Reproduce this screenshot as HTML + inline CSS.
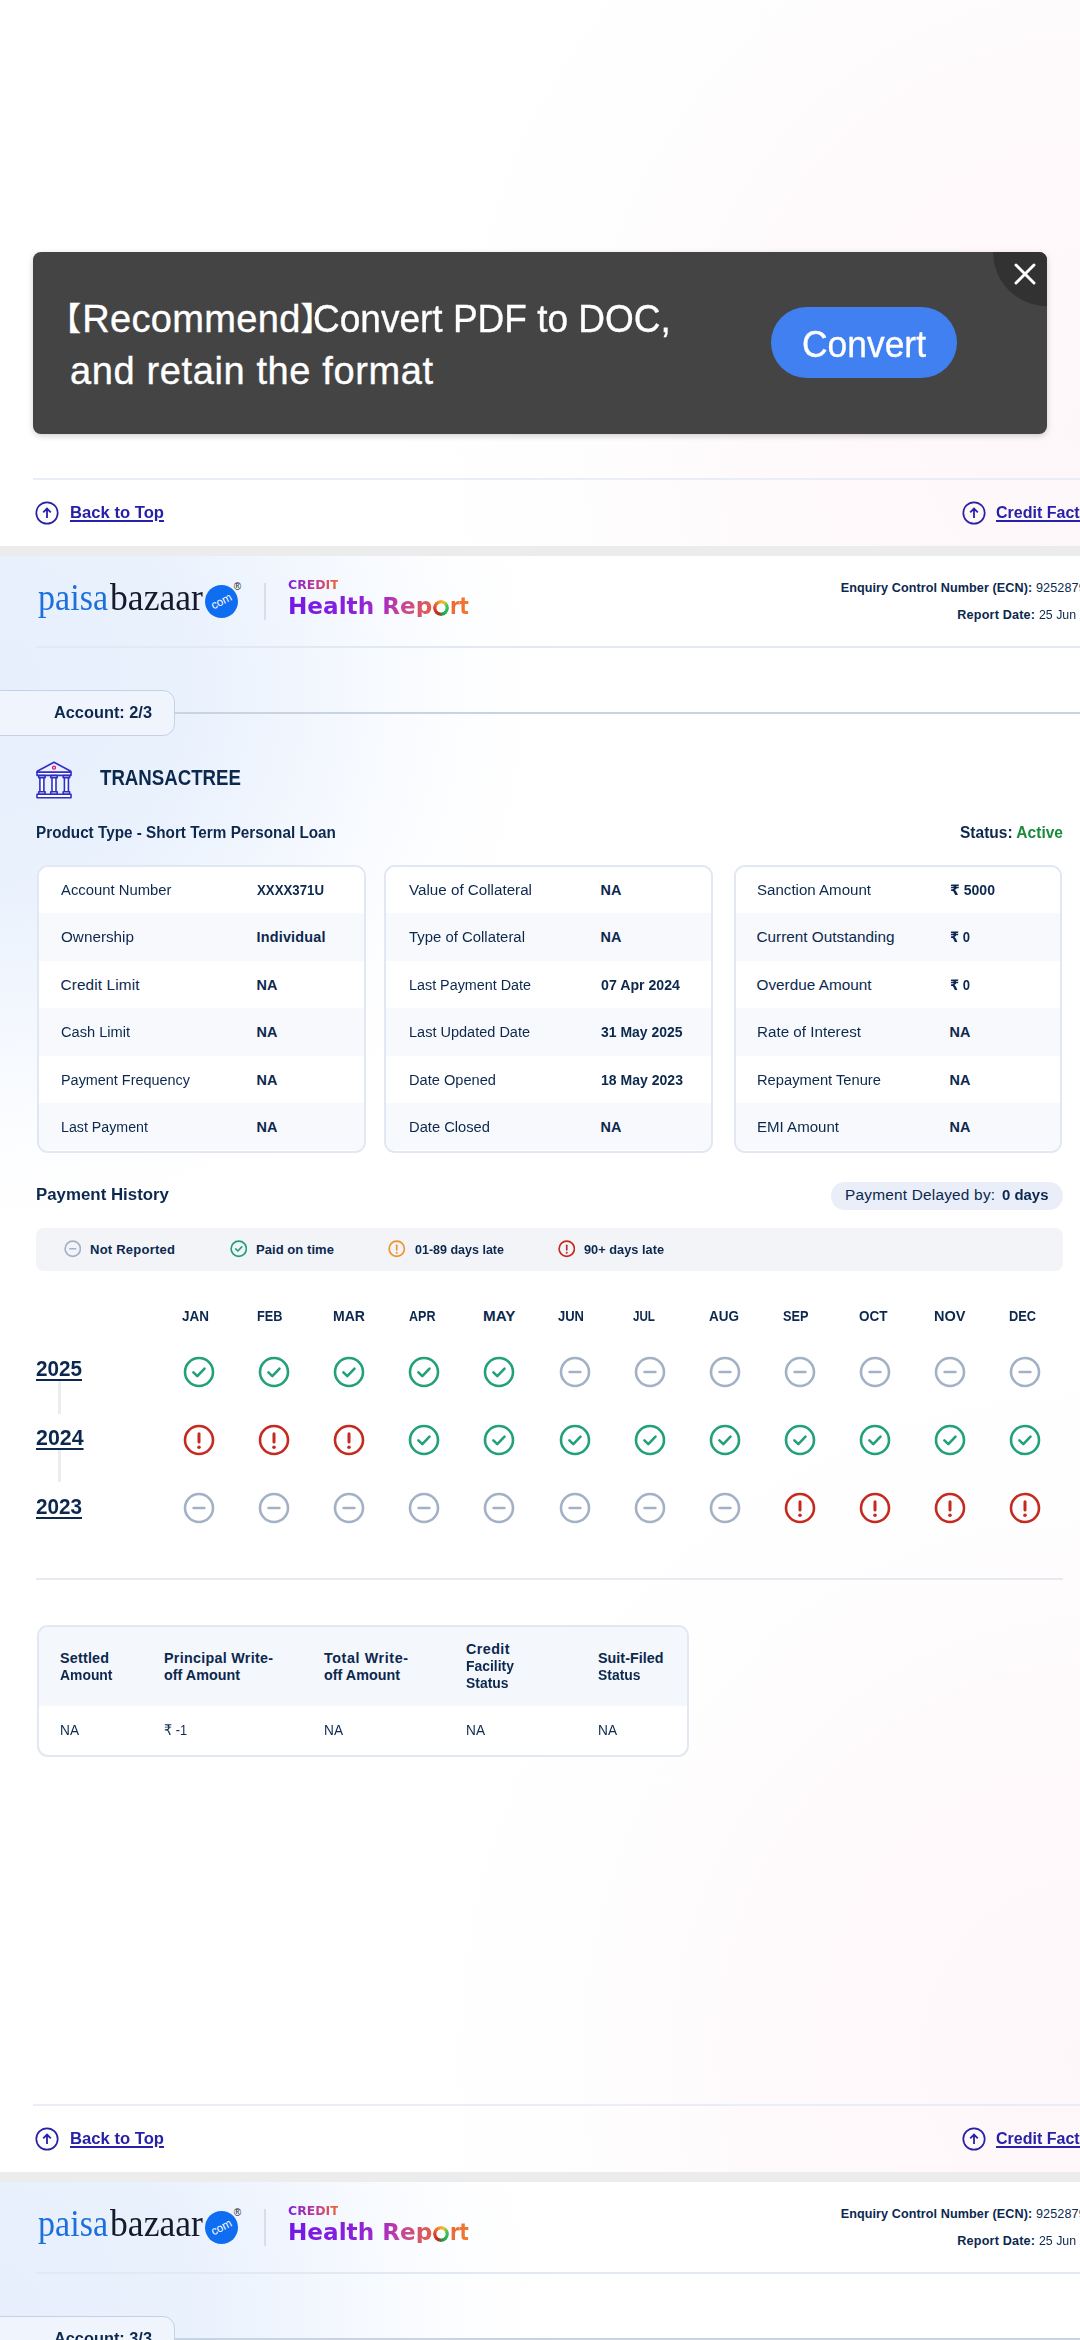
<!DOCTYPE html>
<html lang="en">
<head>
<meta charset="utf-8">
<title>Credit Health Report</title>
<style>
*{box-sizing:border-box;margin:0;padding:0}
html,body{width:1080px;height:2340px;overflow:hidden;background:#ececec}
body{position:relative;font-family:"Liberation Sans","DejaVu Sans",sans-serif;color:#0c284e}
.page{position:absolute;left:0;width:1080px;height:1616px;overflow:hidden;background:#fff}
.page .bg{position:absolute;inset:0;
 background:
  radial-gradient(ellipse 570px 560px at -10px 130px, rgba(231,239,253,1) 0%, rgba(233,241,253,.97) 36%, rgba(238,244,254,.62) 62%, rgba(246,249,255,.25) 82%, rgba(255,255,255,0) 100%),
  radial-gradient(ellipse 700px 720px at 1100px 1500px, rgba(254,247,249,1) 0%, rgba(254,248,250,.9) 40%, rgba(254,251,252,.5) 70%, rgba(255,255,255,0) 100%);}
.abs{position:absolute}
.t{position:absolute;white-space:nowrap;line-height:1;transform-origin:0 50%}
.b{font-weight:bold}
/* header */
.hline{position:absolute;left:36px;right:0;height:2px;background:#e2e9f3}
.pb{position:absolute;left:38px;top:22px;font-family:"Liberation Serif","DejaVu Serif",serif;font-size:37px;line-height:44px;letter-spacing:-0.5px;white-space:nowrap;color:#161a2b}
.pb i{font-style:normal;color:#1c6fdc}
.com{position:absolute;width:33px;height:33px;border-radius:50%;background:#0f6df2}
.com span{position:absolute;left:0;top:0;width:33px;height:33px;line-height:32px;text-align:center;color:#fff;font-size:11.5px;transform:rotate(-27deg)}
.reg{position:absolute;font-size:10px;line-height:10px;color:#222;z-index:2}
.vbar{position:absolute;width:2px;height:37px;background:#d5deec}
.credit{position:absolute;left:288px;top:21px;font-size:14px;line-height:16px;font-weight:bold;letter-spacing:.2px;background:linear-gradient(90deg,#7a22e0 0%,#c23a8a 60%,#ec6a2c 100%);-webkit-background-clip:text;background-clip:text;color:transparent}
.hr{position:absolute;left:287px;top:34px;font-size:27px;line-height:32px;font-weight:bold;white-space:nowrap;letter-spacing:-.2px;background:linear-gradient(90deg,#7418e6 0%,#9a2ad0 38%,#c84a80 62%,#ee7a2a 100%);-webkit-background-clip:text;background-clip:text;color:transparent}
.ecn{position:absolute;left:840px;top:24px;font-size:12.5px;line-height:14px;white-space:nowrap}
.rdate{position:absolute;left:957px;top:52px;font-size:12.5px;line-height:14px;white-space:nowrap}
/* account tab */
.tab{position:absolute;left:-20px;width:195px;height:46px;border:1.5px solid #c6d2e4;border-radius:12px;background:#eff4fd}
.tabline{position:absolute;left:175px;right:0;height:2px;background:#c9d4e3}
/* footer */
.fline{position:absolute;left:33px;right:0;height:2px;background:#e9edf5}
.lnk{position:absolute;font-size:17.5px;line-height:20px;font-weight:bold;color:#2a22a8;text-decoration:underline;text-decoration-thickness:2px;text-underline-offset:2px;white-space:nowrap}
.upic{position:absolute;width:24px;height:24px}

/* cards */
.card{position:absolute;top:309.3px;width:328.8px;height:288px;border:2.5px solid #e2e8f3;border-radius:11px;background:#fff;overflow:hidden}
.row{position:relative;height:47.45px;background:#fff}
.row:first-child{height:45.9px}
.row.g{background:#f7f9fc}
.k{position:absolute;left:21px;top:14px;font-size:14.6px;line-height:18px;white-space:nowrap;letter-spacing:.3px}
.v{position:absolute;top:14px;font-size:14.2px;line-height:18px;font-weight:bold;white-space:nowrap;letter-spacing:.2px}
.pill{position:absolute;left:831px;top:625.6px;width:232px;height:28px;border-radius:14px;background:#e9eef8;font-size:15.3px;line-height:28px;padding-left:14px;white-space:nowrap;letter-spacing:.3px}
.legend{position:absolute;left:36px;top:671.5px;width:1027px;height:43.2px;border-radius:8px;background:#f2f4f8}
.li{position:absolute;top:12.6px;width:17.5px;height:17.5px;stroke-width:3}
.lt{position:absolute;top:14px;font-size:12.6px;line-height:16px;font-weight:bold;white-space:nowrap;letter-spacing:.1px}
.mo{position:absolute;top:752px;font-size:14.6px;line-height:16px;font-weight:bold;white-space:nowrap;letter-spacing:.2px}
.yr{position:absolute;left:36px;font-size:21.5px;line-height:24px;font-weight:bold;text-decoration:underline;text-decoration-thickness:2px;text-underline-offset:2px;letter-spacing:-.4px}
.yc{position:absolute;left:58px;width:3px;height:33px;background:#ebedf1}
.ic{position:absolute;width:32px;height:32px;stroke-width:2.6}
.hr2{position:absolute;left:36px;width:1027px;height:2px;background:#e6ebf3}
.btab{position:absolute;left:37.2px;top:1068.7px;width:651.6px;height:132.3px;border:2.5px solid #e2e8f3;border-radius:11px;background:#fff;overflow:hidden}
.bh{position:absolute;left:0;top:0;right:0;height:79.5px;background:#f4f7fc}
.th{position:absolute;font-size:14px;line-height:17px;font-weight:bold;letter-spacing:.25px;white-space:nowrap}
.td{position:absolute;top:95px;font-size:14.3px;line-height:17px;white-space:nowrap}

/* banner */
.banner{position:absolute;left:33px;top:252px;width:1014px;height:182px;border-radius:8px;background:#444;overflow:hidden;box-shadow:0 2px 6px rgba(0,0,0,.18)}
.corner{position:absolute;right:-54px;top:-54px;width:108px;height:108px;border-radius:50%;background:#323232}
.bx{position:absolute;left:980px;top:10px;width:24px;height:24px}
.cbtn{position:absolute;left:738px;top:54.5px;width:186px;height:71.5px;border-radius:36px;background:#4080f0}
.g1{background:linear-gradient(90deg,#7a22e0 0%,#c23a8a 60%,#ec6a2c 100%);-webkit-background-clip:text;background-clip:text;color:transparent}
.g2{background:linear-gradient(100deg,#7216e8 0%,#8a22da 45%,#a82cc0 66%,#c2479a 78%,#d4546c 90%,#e66044 100%);-webkit-background-clip:text;background-clip:text;color:transparent}
.g3{background:linear-gradient(100deg,#e8683c 0%,#f27c2a 100%);-webkit-background-clip:text;background-clip:text;color:transparent}
.oring{position:absolute;width:16px;height:16px;border-radius:50%;color:transparent;font-size:10px;line-height:16px;text-align:center;overflow:hidden;background:conic-gradient(from 0deg,#f0b030 0deg,#e8c040 30deg,#38c45c 75deg,#2fb457 130deg,#1f9a48 170deg,#b82a1e 200deg,#e0402a 270deg,#ee7a30 320deg,#f0b030 360deg);-webkit-mask:radial-gradient(circle,transparent 4.2px,#000 4.9px);mask:radial-gradient(circle,transparent 4.2px,#000 4.9px)}
</style>
</head>
<body>
<svg width="0" height="0" style="position:absolute">
  <defs>
    <g id="i-nr"><circle cx="15" cy="15" r="14" fill="none" stroke="#a3b1c6"/><path d="M9.6 15h10.8" stroke="#a3b1c6" stroke-linecap="round" fill="none"/></g>
    <g id="i-ok"><circle cx="15" cy="15" r="14" fill="none" stroke="#22a07a"/><path d="M9.4 15.4l3.9 3.7 7.2-7.4" stroke="#22a07a" stroke-linecap="round" stroke-linejoin="round" fill="none"/></g>
    <g id="i-late"><circle cx="15" cy="15" r="14" fill="none" stroke="currentColor"/><rect x="13.5" y="7.2" width="3" height="11.4" rx="1.5" fill="currentColor" stroke="none"/><circle cx="15" cy="22.2" r="1.8" fill="currentColor" stroke="none"/></g>
  </defs>
</svg>

<!-- PAGE 1 (tail) -->
<div class="page" style="top:-1070px">
  <div class="bg"></div>
  <div class="fline" style="top:1548.0px"></div>
  <svg class="upic" style="left:35px;top:1570.5px" viewBox="0 0 24 24"><circle cx="12" cy="12" r="10.7" fill="none" stroke="#2621a8" stroke-width="1.7"/><path d="M12 17V7.8M8.2 11.4l3.8-3.8 3.8 3.8" fill="none" stroke="#2621a8" stroke-width="1.8"/></svg>
  <svg class="upic" style="left:962px;top:1570.5px" viewBox="0 0 24 24"><circle cx="12" cy="12" r="10.7" fill="none" stroke="#2621a8" stroke-width="1.7"/><path d="M12 17V7.8M8.2 11.4l3.8-3.8 3.8 3.8" fill="none" stroke="#2621a8" stroke-width="1.8"/></svg>
  <div class="t b" style="left:70px;top:1574px;font-size:17.2px;transform:scaleX(0.968);color:#2621a8;text-decoration:underline;text-decoration-thickness:2px;text-underline-offset:2px">Back to Top</div>
  <div class="t b" style="left:995.5px;top:1574px;font-size:17.2px;transform:scaleX(0.932);color:#2621a8;text-decoration:underline;text-decoration-thickness:2px;text-underline-offset:2px">Credit Factors</div>
</div>

<!-- PAGE 2 -->
<div class="page" style="top:556px">
  <div class="bg"></div>
  <div class="com" style="left:205.1px;top:28.8px"><span>com</span></div>
  <div class="reg" style="left:233.7px;top:25.7px">®</div>
  <div class="vbar" style="left:264px;top:27.0px"></div>
  <div class="oring" style="left:433.3px;top:43.9px">o</div>
  <div class="hline" style="top:89.5px"></div>
  <div class="tab" style="top:133.5px"></div>
  <div class="tabline" style="top:156.0px"></div>
    <!-- bank icon -->
  <svg class="abs" style="left:34px;top:203px" width="40" height="40" viewBox="0 0 40 40" fill="none" stroke="#2f2fc4" stroke-width="1.6" stroke-linejoin="round">
    <path d="M20 3.2L3.2 12.2v1.2h33.6v-1.2z" fill="#eef0ff"/>
    <rect x="3" y="13.2" width="34" height="3.2" fill="#fff"/>
    <rect x="3" y="35.2" width="34" height="3.6" fill="#fff"/>
    <path d="M4.7 16.6h6.4v2.2H4.7zM4.7 32.8h6.4v2.2H4.7zM5.9 18.8h4v14h-4z" fill="#fff"/>
    <path d="M16.8 16.6h6.4v2.2h-6.4zM16.8 32.8h6.4v2.2h-6.4zM18 18.8h4v14h-4z" fill="#fff"/>
    <path d="M29.2 16.6h6.4v2.2h-6.4zM29.2 32.8h6.4v2.2h-6.4zM30.4 18.8h4v14h-4z" fill="#fff"/>
    <circle cx="20" cy="8.7" r="1.5" stroke="#d81b60" fill="#ffd7e4" stroke-width="1.3"/>
  </svg>
  <!-- cards -->
  <div class="card" style="left:37.2px"><div class="row"></div><div class="row g"></div><div class="row"></div><div class="row g"></div><div class="row"></div><div class="row g"></div></div>
  <div class="card" style="left:384.3px"><div class="row"></div><div class="row g"></div><div class="row"></div><div class="row g"></div><div class="row"></div><div class="row g"></div></div>
  <div class="card" style="left:733.7px"><div class="row"></div><div class="row g"></div><div class="row"></div><div class="row g"></div><div class="row"></div><div class="row g"></div></div>
  <!-- payment history -->
  <div class="pill"></div>
  <div class="legend">
    <svg class="li" style="left:27.75px" viewBox="-1 -1 32 32"><use href="#i-nr"/></svg>
    <svg class="li" style="left:193.75px" viewBox="-1 -1 32 32"><use href="#i-ok"/></svg>
    <svg class="li" style="left:352.25px" viewBox="-1 -1 32 32"><g color="#f0932b"><use href="#i-late"/></g></svg>
    <svg class="li" style="left:521.75px" viewBox="-1 -1 32 32"><g color="#c42a20"><use href="#i-late"/></g></svg>
  </div>
  <div class="hr2" style="top:1022px"></div>
  <!-- bottom table -->
  <div class="btab"><div class="bh"></div></div>
  <!--TEXTS-->
  <div class="yc" style="top:825.4px"></div>
  <svg class="ic" style="left:183.0px;top:800.4px" viewBox="-1 -1 32 32"><use href="#i-ok"/></svg>
  <svg class="ic" style="left:258.1px;top:800.4px" viewBox="-1 -1 32 32"><use href="#i-ok"/></svg>
  <svg class="ic" style="left:333.2px;top:800.4px" viewBox="-1 -1 32 32"><use href="#i-ok"/></svg>
  <svg class="ic" style="left:408.3px;top:800.4px" viewBox="-1 -1 32 32"><use href="#i-ok"/></svg>
  <svg class="ic" style="left:483.4px;top:800.4px" viewBox="-1 -1 32 32"><use href="#i-ok"/></svg>
  <svg class="ic" style="left:558.5px;top:800.4px" viewBox="-1 -1 32 32"><use href="#i-nr"/></svg>
  <svg class="ic" style="left:633.6px;top:800.4px" viewBox="-1 -1 32 32"><use href="#i-nr"/></svg>
  <svg class="ic" style="left:708.7px;top:800.4px" viewBox="-1 -1 32 32"><use href="#i-nr"/></svg>
  <svg class="ic" style="left:783.8px;top:800.4px" viewBox="-1 -1 32 32"><use href="#i-nr"/></svg>
  <svg class="ic" style="left:858.9px;top:800.4px" viewBox="-1 -1 32 32"><use href="#i-nr"/></svg>
  <svg class="ic" style="left:934.0px;top:800.4px" viewBox="-1 -1 32 32"><use href="#i-nr"/></svg>
  <svg class="ic" style="left:1009.1px;top:800.4px" viewBox="-1 -1 32 32"><use href="#i-nr"/></svg>
  <div class="yc" style="top:893.4px"></div>
  <svg class="ic" style="left:183.0px;top:868.4px" viewBox="-1 -1 32 32"><g color="#c42a20"><use href="#i-late"/></g></svg>
  <svg class="ic" style="left:258.1px;top:868.4px" viewBox="-1 -1 32 32"><g color="#c42a20"><use href="#i-late"/></g></svg>
  <svg class="ic" style="left:333.2px;top:868.4px" viewBox="-1 -1 32 32"><g color="#c42a20"><use href="#i-late"/></g></svg>
  <svg class="ic" style="left:408.3px;top:868.4px" viewBox="-1 -1 32 32"><use href="#i-ok"/></svg>
  <svg class="ic" style="left:483.4px;top:868.4px" viewBox="-1 -1 32 32"><use href="#i-ok"/></svg>
  <svg class="ic" style="left:558.5px;top:868.4px" viewBox="-1 -1 32 32"><use href="#i-ok"/></svg>
  <svg class="ic" style="left:633.6px;top:868.4px" viewBox="-1 -1 32 32"><use href="#i-ok"/></svg>
  <svg class="ic" style="left:708.7px;top:868.4px" viewBox="-1 -1 32 32"><use href="#i-ok"/></svg>
  <svg class="ic" style="left:783.8px;top:868.4px" viewBox="-1 -1 32 32"><use href="#i-ok"/></svg>
  <svg class="ic" style="left:858.9px;top:868.4px" viewBox="-1 -1 32 32"><use href="#i-ok"/></svg>
  <svg class="ic" style="left:934.0px;top:868.4px" viewBox="-1 -1 32 32"><use href="#i-ok"/></svg>
  <svg class="ic" style="left:1009.1px;top:868.4px" viewBox="-1 -1 32 32"><use href="#i-ok"/></svg>
  <svg class="ic" style="left:183.0px;top:936.4px" viewBox="-1 -1 32 32"><use href="#i-nr"/></svg>
  <svg class="ic" style="left:258.1px;top:936.4px" viewBox="-1 -1 32 32"><use href="#i-nr"/></svg>
  <svg class="ic" style="left:333.2px;top:936.4px" viewBox="-1 -1 32 32"><use href="#i-nr"/></svg>
  <svg class="ic" style="left:408.3px;top:936.4px" viewBox="-1 -1 32 32"><use href="#i-nr"/></svg>
  <svg class="ic" style="left:483.4px;top:936.4px" viewBox="-1 -1 32 32"><use href="#i-nr"/></svg>
  <svg class="ic" style="left:558.5px;top:936.4px" viewBox="-1 -1 32 32"><use href="#i-nr"/></svg>
  <svg class="ic" style="left:633.6px;top:936.4px" viewBox="-1 -1 32 32"><use href="#i-nr"/></svg>
  <svg class="ic" style="left:708.7px;top:936.4px" viewBox="-1 -1 32 32"><use href="#i-nr"/></svg>
  <svg class="ic" style="left:783.8px;top:936.4px" viewBox="-1 -1 32 32"><g color="#c42a20"><use href="#i-late"/></g></svg>
  <svg class="ic" style="left:858.9px;top:936.4px" viewBox="-1 -1 32 32"><g color="#c42a20"><use href="#i-late"/></g></svg>
  <svg class="ic" style="left:934.0px;top:936.4px" viewBox="-1 -1 32 32"><g color="#c42a20"><use href="#i-late"/></g></svg>
  <svg class="ic" style="left:1009.1px;top:936.4px" viewBox="-1 -1 32 32"><g color="#c42a20"><use href="#i-late"/></g></svg>
  <div class="fline" style="top:1548.0px"></div>
  <svg class="upic" style="left:35px;top:1570.5px" viewBox="0 0 24 24"><circle cx="12" cy="12" r="10.7" fill="none" stroke="#2621a8" stroke-width="1.7"/><path d="M12 17V7.8M8.2 11.4l3.8-3.8 3.8 3.8" fill="none" stroke="#2621a8" stroke-width="1.8"/></svg>
  <svg class="upic" style="left:962px;top:1570.5px" viewBox="0 0 24 24"><circle cx="12" cy="12" r="10.7" fill="none" stroke="#2621a8" stroke-width="1.7"/><path d="M12 17V7.8M8.2 11.4l3.8-3.8 3.8 3.8" fill="none" stroke="#2621a8" stroke-width="1.8"/></svg>
  <div class="t" style="left:38.4px;top:22px;font-size:38.5px;font-family:'Liberation Serif','DejaVu Serif',serif;transform:scaleX(0.885);color:#1d6fdb">paisa</div>
  <div class="t" style="left:110.4px;top:22px;font-size:38.5px;font-family:'Liberation Serif','DejaVu Serif',serif;transform:scaleX(0.926);color:#151a2c">bazaar</div>
  <div class="t b g1" style="left:288.3px;top:23px;font-size:12.9px;font-family:'DejaVu Sans','Liberation Sans',sans-serif;transform:scaleX(0.966)">CREDIT</div>
  <div class="t b g2" style="left:288.3px;top:38px;font-size:23.3px;font-family:'DejaVu Sans','Liberation Sans',sans-serif;transform:scaleX(0.993)">Health Rep</div>
  <div class="t b g3" style="left:450.4px;top:38px;font-size:23.3px;font-family:'DejaVu Sans','Liberation Sans',sans-serif;transform:scaleX(0.835)">rt</div>
  <div class="t b" style="left:840.7px;top:26px;font-size:12.6px;letter-spacing:0.09px">Enquiry Control Number (ECN):</div>
  <div class="t" style="left:1036px;top:26px;font-size:12.6px;letter-spacing:0.12px">925287954</div>
  <div class="t b" style="left:957.3px;top:53px;font-size:12.6px;letter-spacing:0.19px">Report Date:</div>
  <div class="t" style="left:1039.3px;top:53px;font-size:12.6px;transform:scaleX(0.981)">25 Jun 2025</div>
  <div class="t b" style="left:53.5px;top:149px;font-size:16.8px;transform:scaleX(0.973)">Account: 2/3</div>
  <div class="t b" style="left:100px;top:211px;font-size:21.6px;transform:scaleX(0.864)">TRANSACTREE</div>
  <div class="t b" style="left:35.5px;top:269px;font-size:15.8px;transform:scaleX(0.967)">Product Type - Short Term Personal Loan</div>
  <div class="t b" style="left:960px;top:269px;font-size:15.8px;transform:scaleX(0.983)">Status: <span style="color:#1b8a3e">Active</span></div>
  <div class="t" style="left:60.5px;top:326px;font-size:15.3px;transform:scaleX(0.970)">Account Number</div>
  <div class="t b" style="left:256.5px;top:327px;font-size:14.4px;transform:scaleX(0.920)">XXXX371U</div>
  <div class="t" style="left:60.5px;top:373px;font-size:15.3px;transform:scaleX(0.998)">Ownership</div>
  <div class="t b" style="left:256.5px;top:374px;font-size:14.4px;letter-spacing:0.20px">Individual</div>
  <div class="t" style="left:60.5px;top:421px;font-size:15.3px;letter-spacing:0.15px">Credit Limit</div>
  <div class="t b" style="left:256.5px;top:422px;font-size:14.4px;letter-spacing:0.20px">NA</div>
  <div class="t" style="left:60.5px;top:468px;font-size:15.3px;transform:scaleX(0.955)">Cash Limit</div>
  <div class="t b" style="left:256.5px;top:469px;font-size:14.4px;letter-spacing:0.20px">NA</div>
  <div class="t" style="left:60.5px;top:516px;font-size:15.3px;transform:scaleX(0.942)">Payment Frequency</div>
  <div class="t b" style="left:256.5px;top:517px;font-size:14.4px;letter-spacing:0.20px">NA</div>
  <div class="t" style="left:60.5px;top:563px;font-size:15.3px;transform:scaleX(0.930)">Last Payment</div>
  <div class="t b" style="left:256.5px;top:564px;font-size:14.4px;letter-spacing:0.20px">NA</div>
  <div class="t" style="left:408.5px;top:326px;font-size:15.3px;transform:scaleX(0.993)">Value of Collateral</div>
  <div class="t b" style="left:600.5px;top:327px;font-size:14.4px;letter-spacing:0.20px">NA</div>
  <div class="t" style="left:408.5px;top:373px;font-size:15.3px;transform:scaleX(0.974)">Type of Collateral</div>
  <div class="t b" style="left:600.5px;top:374px;font-size:14.4px;letter-spacing:0.20px">NA</div>
  <div class="t" style="left:408.5px;top:421px;font-size:15.3px;transform:scaleX(0.938)">Last Payment Date</div>
  <div class="t b" style="left:600.5px;top:422px;font-size:14.4px;transform:scaleX(0.984)">07 Apr 2024</div>
  <div class="t" style="left:408.5px;top:468px;font-size:15.3px;transform:scaleX(0.949)">Last Updated Date</div>
  <div class="t b" style="left:600.5px;top:469px;font-size:14.4px;transform:scaleX(0.970)">31 May 2025</div>
  <div class="t" style="left:408.5px;top:516px;font-size:15.3px;transform:scaleX(0.956)">Date Opened</div>
  <div class="t b" style="left:600.5px;top:517px;font-size:14.4px;transform:scaleX(0.976)">18 May 2023</div>
  <div class="t" style="left:408.5px;top:563px;font-size:15.3px;transform:scaleX(0.962)">Date Closed</div>
  <div class="t b" style="left:600.5px;top:564px;font-size:14.4px;letter-spacing:0.20px">NA</div>
  <div class="t" style="left:756.5px;top:326px;font-size:15.3px;transform:scaleX(0.986)">Sanction Amount</div>
  <div class="t b" style="left:949.5px;top:327px;font-size:14.4px;transform:scaleX(0.978)">₹ 5000</div>
  <div class="t" style="left:756.5px;top:373px;font-size:15.3px;letter-spacing:0.01px">Current Outstanding</div>
  <div class="t b" style="left:949.5px;top:374px;font-size:14.4px;transform:scaleX(0.908)">₹ 0</div>
  <div class="t" style="left:756.5px;top:421px;font-size:15.3px;letter-spacing:0.02px">Overdue Amount</div>
  <div class="t b" style="left:949.5px;top:422px;font-size:14.4px;transform:scaleX(0.908)">₹ 0</div>
  <div class="t" style="left:756.5px;top:468px;font-size:15.3px;transform:scaleX(0.994)">Rate of Interest</div>
  <div class="t b" style="left:949.5px;top:469px;font-size:14.4px;letter-spacing:0.20px">NA</div>
  <div class="t" style="left:756.5px;top:516px;font-size:15.3px;transform:scaleX(0.961)">Repayment Tenure</div>
  <div class="t b" style="left:949.5px;top:517px;font-size:14.4px;letter-spacing:0.20px">NA</div>
  <div class="t" style="left:756.5px;top:563px;font-size:15.3px;transform:scaleX(0.984)">EMI Amount</div>
  <div class="t b" style="left:949.5px;top:564px;font-size:14.4px;letter-spacing:0.20px">NA</div>
  <div class="t b" style="left:36px;top:630px;font-size:17.4px;transform:scaleX(0.969)">Payment History</div>
  <div class="t" style="left:845px;top:631px;font-size:15.4px;letter-spacing:0.21px">Payment Delayed by:</div>
  <div class="t b" style="left:1001.5px;top:631px;font-size:15.4px;transform:scaleX(0.970)">0 days</div>
  <div class="t b" style="left:90px;top:687px;font-size:13px;letter-spacing:0.24px">Not Reported</div>
  <div class="t b" style="left:256px;top:687px;font-size:13px;letter-spacing:0.06px">Paid on time</div>
  <div class="t b" style="left:415px;top:687px;font-size:13px;transform:scaleX(0.962)">01-89 days late</div>
  <div class="t b" style="left:584px;top:687px;font-size:13px;transform:scaleX(0.984)">90+ days late</div>
  <div class="t b" style="left:182px;top:752px;font-size:15.2px;transform:scaleX(0.888)">JAN</div>
  <div class="t b" style="left:257px;top:752px;font-size:15.2px;transform:scaleX(0.840)">FEB</div>
  <div class="t b" style="left:333px;top:752px;font-size:15.2px;transform:scaleX(0.925)">MAR</div>
  <div class="t b" style="left:408.5px;top:752px;font-size:15.2px;transform:scaleX(0.826)">APR</div>
  <div class="t b" style="left:483px;top:752px;font-size:15.2px;letter-spacing:0.07px">MAY</div>
  <div class="t b" style="left:558px;top:752px;font-size:15.2px;transform:scaleX(0.856)">JUN</div>
  <div class="t b" style="left:633px;top:752px;font-size:15.2px;transform:scaleX(0.766)">JUL</div>
  <div class="t b" style="left:708.5px;top:752px;font-size:15.2px;transform:scaleX(0.889)">AUG</div>
  <div class="t b" style="left:783px;top:752px;font-size:15.2px;transform:scaleX(0.839)">SEP</div>
  <div class="t b" style="left:859px;top:752px;font-size:15.2px;transform:scaleX(0.889)">OCT</div>
  <div class="t b" style="left:934px;top:752px;font-size:15.2px;transform:scaleX(0.957)">NOV</div>
  <div class="t b" style="left:1009px;top:752px;font-size:15.2px;transform:scaleX(0.842)">DEC</div>
  <div class="t b" style="left:36px;top:802px;font-size:21.6px;transform:scaleX(0.957);text-decoration:underline;text-decoration-thickness:2px;text-underline-offset:2.5px">2025</div>
  <div class="t b" style="left:36px;top:871px;font-size:21.6px;transform:scaleX(0.989);text-decoration:underline;text-decoration-thickness:2px;text-underline-offset:2.5px">2024</div>
  <div class="t b" style="left:36px;top:940px;font-size:21.6px;transform:scaleX(0.957);text-decoration:underline;text-decoration-thickness:2px;text-underline-offset:2.5px">2023</div>
  <div class="t b" style="left:60px;top:1095px;font-size:14.3px;letter-spacing:0.22px">Settled</div>
  <div class="t b" style="left:60px;top:1112px;font-size:14.3px;transform:scaleX(0.972)">Amount</div>
  <div class="t b" style="left:164px;top:1095px;font-size:14.3px;letter-spacing:0.29px">Principal Write-</div>
  <div class="t b" style="left:164px;top:1112px;font-size:14.3px;letter-spacing:0.03px">off Amount</div>
  <div class="t b" style="left:324px;top:1095px;font-size:14.3px;letter-spacing:0.61px">Total Write-</div>
  <div class="t b" style="left:324px;top:1112px;font-size:14.3px;letter-spacing:0.03px">off Amount</div>
  <div class="t b" style="left:466px;top:1086px;font-size:14.3px;letter-spacing:0.44px">Credit</div>
  <div class="t b" style="left:466px;top:1103px;font-size:14.3px;transform:scaleX(0.974)">Facility</div>
  <div class="t b" style="left:466px;top:1120px;font-size:14.3px;transform:scaleX(0.972)">Status</div>
  <div class="t b" style="left:598px;top:1095px;font-size:14.3px;letter-spacing:0.04px">Suit-Filed</div>
  <div class="t b" style="left:598px;top:1112px;font-size:14.3px;transform:scaleX(0.972)">Status</div>
  <div class="t" style="left:60px;top:1167px;font-size:14.6px;transform:scaleX(0.937)">NA</div>
  <div class="t" style="left:164px;top:1167px;font-size:14.6px;transform:scaleX(0.874)">₹ -1</div>
  <div class="t" style="left:324px;top:1167px;font-size:14.6px;transform:scaleX(0.937)">NA</div>
  <div class="t" style="left:466px;top:1167px;font-size:14.6px;transform:scaleX(0.937)">NA</div>
  <div class="t" style="left:598px;top:1167px;font-size:14.6px;transform:scaleX(0.937)">NA</div>
  <div class="t b" style="left:70px;top:1574px;font-size:17.2px;transform:scaleX(0.968);color:#2621a8;text-decoration:underline;text-decoration-thickness:2px;text-underline-offset:2px">Back to Top</div>
  <div class="t b" style="left:995.5px;top:1574px;font-size:17.2px;transform:scaleX(0.932);color:#2621a8;text-decoration:underline;text-decoration-thickness:2px;text-underline-offset:2px">Credit Factors</div>
</div>

<!-- PAGE 3 (head) -->
<div class="page" style="top:2182px">
  <div class="bg"></div>
  <div class="com" style="left:205.1px;top:28.8px"><span>com</span></div>
  <div class="reg" style="left:233.7px;top:25.7px">®</div>
  <div class="vbar" style="left:264px;top:27.0px"></div>
  <div class="oring" style="left:433.3px;top:43.9px">o</div>
  <div class="hline" style="top:89.5px"></div>
  <div class="tab" style="top:133.5px"></div>
  <div class="tabline" style="top:156.0px"></div>
  <div class="t" style="left:38.4px;top:22px;font-size:38.5px;font-family:'Liberation Serif','DejaVu Serif',serif;transform:scaleX(0.885);color:#1d6fdb">paisa</div>
  <div class="t" style="left:110.4px;top:22px;font-size:38.5px;font-family:'Liberation Serif','DejaVu Serif',serif;transform:scaleX(0.926);color:#151a2c">bazaar</div>
  <div class="t b g1" style="left:288.3px;top:23px;font-size:12.9px;font-family:'DejaVu Sans','Liberation Sans',sans-serif;transform:scaleX(0.966)">CREDIT</div>
  <div class="t b g2" style="left:288.3px;top:38px;font-size:23.3px;font-family:'DejaVu Sans','Liberation Sans',sans-serif;transform:scaleX(0.993)">Health Rep</div>
  <div class="t b g3" style="left:450.4px;top:38px;font-size:23.3px;font-family:'DejaVu Sans','Liberation Sans',sans-serif;transform:scaleX(0.835)">rt</div>
  <div class="t b" style="left:840.7px;top:26px;font-size:12.6px;letter-spacing:0.09px">Enquiry Control Number (ECN):</div>
  <div class="t" style="left:1036px;top:26px;font-size:12.6px;letter-spacing:0.12px">925287954</div>
  <div class="t b" style="left:957.3px;top:53px;font-size:12.6px;letter-spacing:0.19px">Report Date:</div>
  <div class="t" style="left:1039.3px;top:53px;font-size:12.6px;transform:scaleX(0.981)">25 Jun 2025</div>
  <div class="t b" style="left:53.5px;top:149px;font-size:16.8px;transform:scaleX(0.973)">Account: 3/3</div>
</div>

  <div class="banner"><div class="corner"></div><svg class="bx" viewBox="0 0 24 24"><path d="M3 3l18 18M21 3L3 21" stroke="#fff" stroke-width="2.9" stroke-linecap="round" fill="none"/></svg><div class="cbtn"></div></div>
  <div class="t cj" style="left:65px;top:303px;font-size:32.3px;font-family:'Liberation Sans','Noto Sans CJK SC',sans-serif;color:#fff;-webkit-text-stroke:.35px #fff;font-feature-settings:'halt'">【</div>
  <div class="t" style="left:82.3px;top:300px;font-size:38px;letter-spacing:0.32px;color:#fff;-webkit-text-stroke:.35px #fff">Recommend</div>
  <div class="t cj" style="left:300.5px;top:303px;font-size:32.3px;font-family:'Liberation Sans','Noto Sans CJK SC',sans-serif;color:#fff;-webkit-text-stroke:.35px #fff;font-feature-settings:'halt'">】</div>
  <div class="t" style="left:313px;top:300px;font-size:38px;transform:scaleX(0.974);color:#fff;-webkit-text-stroke:.35px #fff">Convert PDF to DOC,</div>
  <div class="t" style="left:70px;top:352px;font-size:38px;letter-spacing:0.62px;color:#fff;-webkit-text-stroke:.35px #fff">and retain the format</div>
  <div class="t" style="left:801.7px;top:327px;font-size:36.5px;transform:scaleX(0.970);color:#fff;-webkit-text-stroke:.35px #fff">Convert</div>
</body>
</html>
